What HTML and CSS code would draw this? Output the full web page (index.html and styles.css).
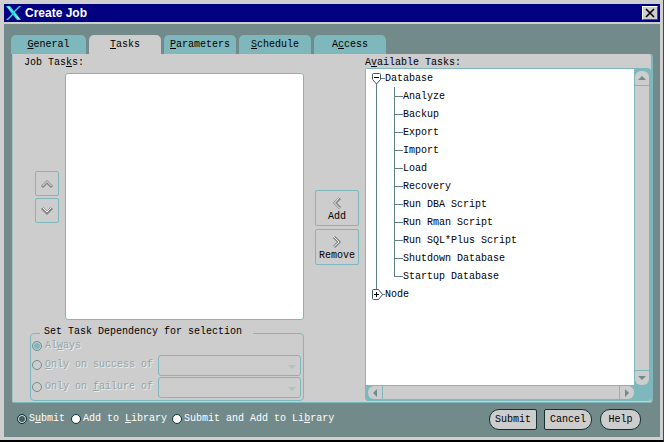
FILE: index.html
```html
<!DOCTYPE html>
<html lang="en">
<head>
<meta charset="utf-8">
<title>Create Job</title>
<link rel="stylesheet" href="styles.css">
</head>
<body>
<div class="window">
  <header class="titlebar">
    <svg class="logo" width="16" height="16" viewBox="0 0 16 16"><path d="M0 1h4l4 5 5-5h2L9 7l6 8h-4L7 10l-5 5H0l6-6z" fill="#2fd8d8"/><path d="M1 2h2l9 12h2z" fill="#9ff"/></svg>
    <span class="title">Create Job</span>
    <button class="close"><svg width="10" height="10" viewBox="0 0 10 10"><path d="M1 1l8 8M9 1l-8 8" stroke="#000" stroke-width="1.6"/></svg></button>
  </header>
  <main class="content">
    <nav class="tabs">
      <div class="tab"><u>G</u>eneral</div>
      <div class="tab active"><u>T</u>asks</div>
      <div class="tab"><u>P</u>arameters</div>
      <div class="tab"><u>S</u>chedule</div>
      <div class="tab">A<u>c</u>cess</div>
    </nav>
    <section class="panel">
      <div class="col-left">
        <div class="label label-job">Job Tas<u>k</u>s:</div>
        <div class="list-row">
          <div class="order">
            <button class="icon-btn"><svg width="14" height="10" viewBox="0 0 14 10"><path d="M2 8l5-5 5 5" fill="none" stroke="#858585" stroke-width="3"/><path d="M2.500 7l4.500-4.500 4.500 4.500" fill="none" stroke="#f4f4f4" stroke-width="1"/></svg></button>
            <button class="icon-btn"><svg width="14" height="10" viewBox="0 0 14 10"><path d="M2 2l5 5 5-5" fill="none" stroke="#858585" stroke-width="3"/><path d="M2.500 1.500l4.500 4.500 4.500-4.500" fill="none" stroke="#f4f4f4" stroke-width="1"/></svg></button>
          </div>
          <div class="job-list"></div>
        </div>
        <div class="group">
          <div class="legend">Set Task Dependency for selection</div>
          <div class="opt disabled first"><span class="radio on"></span>Al<u>w</u>ays</div>
          <div></div>
          <div class="opt disabled"><span class="radio"></span><u>O</u>nly on success of</div>
          <div class="select"><span class="caret"></span></div>
          <div class="opt disabled"><span class="radio"></span>Only on <u>f</u>ailure of</div>
          <div class="select"><span class="caret"></span></div>
        </div>
      </div>
      <div class="col-mid">
        <button class="move-btn"><svg width="12" height="14" viewBox="0 0 12 14"><path d="M9 2l-5 5 5 5" fill="none" stroke="#858585" stroke-width="3"/><path d="M8.500 1.500l-5 5.500 5 5" fill="none" stroke="#f4f4f4" stroke-width="1"/></svg>Add</button>
        <button class="move-btn"><svg width="12" height="14" viewBox="0 0 12 14"><path d="M3 2l5 5-5 5" fill="none" stroke="#858585" stroke-width="3"/><path d="M2.500 1.500l5.500 5.500-5.500 5" fill="none" stroke="#f4f4f4" stroke-width="1"/></svg>Remove</button>
      </div>
      <div class="col-right">
        <div class="label">A<u>v</u>ailable Tasks:</div>
        <div class="tree-box">
          <div class="tree">
            <div class="root">
              <svg class="twist" width="11" height="12" viewBox="0 0 11 12"><path d="M1.500 1.500q0-1 1-1h6q1 0 1 1v5l-4 4.500-4-4.500z" fill="#fff" stroke="#3d5a5a"/><path d="M3 4.500h5" stroke="#000"/></svg>
              Database
            </div>
            <ul class="children">
              <li>Analyze</li>
              <li>Backup</li>
              <li>Export</li>
              <li>Import</li>
              <li>Load</li>
              <li>Recovery</li>
              <li>Run DBA Script</li>
              <li>Run Rman Script</li>
              <li>Run SQL*Plus Script</li>
              <li>Shutdown Database</li>
              <li>Startup Database</li>
            </ul>
            <div class="root">
              <svg class="twist" width="12" height="11" viewBox="0 0 12 11"><path d="M1.500 1.500q0-1 1-1h5l4 5-4 5h-5q-1 0-1-1z" fill="#fff" stroke="#3d5a5a"/><path d="M3 5.500h5M5.500 3v5" stroke="#000"/></svg>
              Node
            </div>
          </div>
          <div class="vbar">
            <span class="sb-btn sb-up"><i class="tri tri-up"></i></span>
            <span class="sb-track"></span>
            <span class="sb-btn sb-down"><i class="tri tri-down"></i></span>
          </div>
          <div class="hbar">
            <span class="sb-btn sb-left"><i class="tri tri-left"></i></span>
            <span class="sb-track"></span>
            <span class="sb-btn sb-right"><i class="tri tri-right"></i></span>
          </div>
          <div class="corner"></div>
        </div>
      </div>
    </section>
    <footer class="footer">
      <div class="opt light"><span class="radio dark"></span>S<u>u</u>bmit</div>
      <div class="opt light"><span class="radio white"></span>Add to <u>L</u>ibrary</div>
      <div class="opt light"><span class="radio white"></span>Submit and Add to Li<u>b</u>rary</div>
      <div class="actions">
        <button class="action a-left">Submit</button>
        <button class="action a-right">Cancel</button>
        <button class="action a-both">Help</button>
      </div>
    </footer>
  </main>
</div>
</body>
</html>
```
FILE: styles.css
```css
* { box-sizing: border-box; }
html, body { margin: 0; padding: 0; }
body {
  width: 664px;
  height: 442px;
  overflow: hidden;
  font: 10px/12px "Liberation Mono", "DejaVu Sans Mono", monospace;
  color: #000;
}
button { font: inherit; color: inherit; padding: 0; margin: 0; cursor: default; }
u { text-underline-offset: 1px; }

.window {
  width: 664px;
  height: 442px;
  background: #cfcfcf;
  padding: 4px 3px 3px 4px;
  border-right: 1px solid #444;
  border-bottom: 2px solid #000;
  display: flex;
  flex-direction: column;
}

.titlebar {
  height: 18px;
  flex: none;
  background: #000080;
  display: flex;
  align-items: center;
  padding: 0 2px;
  margin-bottom: 2px;
}
.logo { flex: none; margin-right: 3px; }
.title {
  font: bold 12px/18px "Liberation Sans", Arial, sans-serif;
  color: #fff;
}
.close {
  margin-left: auto;
  width: 16px;
  height: 14px;
  background: #cfcfcf;
  border: 1px solid;
  border-color: #fff #555 #555 #fff;
  display: flex;
  align-items: center;
  justify-content: center;
}

.content {
  flex: 1;
  min-height: 0;
  background: #728b8a;
  padding: 11px 7px 0 8px;
  display: flex;
  flex-direction: column;
}

.tabs { display: flex; gap: 3px; margin-left: -1px; height: 19px; flex: none; }
.tab {
  width: 72px;
  height: 19px;
  background: #7fb8bc;
  border-radius: 5px 5px 0 0;
  text-align: center;
  line-height: 20px;
}
.tab:first-child { width: 75px; }
.tab.active { background: #cdcdcd; }

.panel {
  height: 349px;
  flex: none;
  background: #cdcdcd;
  border-radius: 0 3px 3px 2px;
  border-right: 2px solid #7fb8bc;
  border-bottom: 1px solid #7fb8bc;
  border-left: 1px solid #a9c4c4;
  padding: 1px 0 0 11px;
  display: flex;
}
.col-left { width: 280px; flex: none; }

.label { height: 13px; line-height: 13px; padding-top: 1px; }
.label-job { height: 18px; }

.list-row { display: flex; height: 247px; }
.order {
  width: 41px;
  padding: 98px 0 0 11px;
  display: flex;
  flex-direction: column;
  gap: 2px;
}
.icon-btn {
  width: 24px;
  height: 25px;
  background: #cdcdcd;
  border: 1px solid #7fb8bc;
  border-radius: 2px;
  display: flex;
  align-items: center;
  justify-content: center;
}
.job-list {
  width: 239px;
  background: #fff;
  border: 1px solid #7fb8bc;
  border-radius: 3px;
}

.group {
  position: relative;
  margin: 13px 0 0 6px;
  width: 274px;
  height: 68px;
  border: 1px solid #7fb8bc;
  border-radius: 4px;
  padding-left: 1px;
  display: grid;
  grid-template-columns: 126px 143px;
  grid-template-rows: 20px 21px 21px;
  row-gap: 1px;
  align-items: center;
}
.legend {
  position: absolute;
  left: 9px;
  top: -9px;
  padding: 1px 11px 0 4px;
  background: #cdcdcd;
  height: 13px;
}
.opt { display: flex; align-items: center; white-space: pre; }
.group .opt { padding-bottom: 2px; }
.group .opt.first { padding: 4px 0 0; }
.disabled {
  color: #93a5a5;
  text-shadow: 1px 1px 0 #ececec;
}
.radio {
  flex: none;
  width: 10px;
  height: 10px;
  border-radius: 50%;
  border: 1px solid #6f9090;
  margin-right: 3px;
  background: #cdcdcd;
}
.radio.on { background: #7fb8bc; box-shadow: inset 0 0 0 1px #cdcdcd; }
.radio.dark { background: #3f5f5f; border-color: #12302f; box-shadow: inset 0 0 0 1px #e6e6e6; }
.radio.white { background: #fff; border-color: #12302f; }
.select {
  height: 21px;
  border: 1px solid #7fb8bc;
  border-radius: 3px;
  position: relative;
}
.caret {
  position: absolute;
  right: 4px;
  top: 9px;
  border: 4px solid transparent;
  border-top: 4px solid #b4c0c0;
  border-bottom: 0;
}

.col-mid {
  flex: none;
  display: flex;
  flex-direction: column;
  gap: 3px;
  margin-left: 11px;
  padding-top: 135px;
  width: 44px;
}
.move-btn {
  width: 44px;
  height: 36px;
  background: #cdcdcd;
  border: 1px solid #7fb8bc;
  border-radius: 2px;
  display: flex;
  flex-direction: column;
  align-items: center;
  padding-top: 5px;
  line-height: 14px;
}

.col-right { flex: none; margin-left: 6px; width: 286px; }
.tree-box {
  width: 286px;
  height: 333px;
  background: #7fb8bc;
  border: 1px solid #7fb8bc;
  border-radius: 3px;
  display: grid;
  grid-template-columns: 268px 16px;
  grid-template-rows: 316px 15px;
}
.tree {
  background: #fff;
  position: relative;
  overflow: hidden;
}
.tree::before {
  content: "";
  position: absolute;
  left: 10px;
  top: 14px;
  width: 1px;
  height: 206px;
  background: #5f8080;
}
.root {
  position: relative;
  height: 18px;
  line-height: 20px;
  padding-left: 19px;
}
.root::before {
  content: "";
  position: absolute;
  left: 15px;
  top: 9px;
  width: 4px;
  height: 1px;
  background: #5f8080;
}
.twist { position: absolute; left: 5px; top: 4px; }
.children { list-style: none; margin: 0; padding: 0 0 0 37px; }
.children li {
  position: relative;
  height: 18px;
  line-height: 20px;
}
.children li::before {
  content: "";
  position: absolute;
  left: -9px;
  top: 9px;
  width: 9px;
  height: 1px;
  background: #5f8080;
}
.children li::after {
  content: "";
  position: absolute;
  left: -9px;
  top: 0;
  width: 1px;
  height: 18px;
  background: #5f8080;
}
.children li:last-child::after { height: 10px; }

.vbar { display: flex; flex-direction: column; padding: 2px 1px 0 1px; }
.hbar { display: flex; padding: 1px 0 1px 2px; }
.sb-track { flex: 1; background: #cdcdcd; }
.vbar .sb-track { border-top: 1px solid #7fb8bc; border-bottom: 1px solid #7fb8bc; }
.hbar .sb-track { border-left: 1px solid #7fb8bc; border-right: 1px solid #7fb8bc; }
.sb-btn {
  flex: none;
  background: #cdcdcd;
  display: flex;
  align-items: center;
  justify-content: center;
}
.vbar .sb-btn { height: 14px; }
.hbar .sb-btn { width: 14px; }
.sb-up { border-radius: 6px 6px 0 0; }
.sb-down { border-radius: 0 0 6px 6px; }
.sb-left { border-radius: 6px 0 0 6px; }
.sb-right { border-radius: 0 6px 6px 0; }
.tri { display: block; width: 0; height: 0; border: 4px solid transparent; }
.tri-up { border-bottom-color: #728b8a; border-top: 0; }
.tri-down { border-top-color: #728b8a; border-bottom: 0; }
.tri-left { border-right-color: #728b8a; border-left: 0; }
.tri-right { border-left-color: #728b8a; border-right: 0; }

.footer {
  flex: 1;
  display: flex;
  align-items: center;
  gap: 6px;
  padding: 0 12px 3px 5px;
}
.light { color: #fff; }
.footer .radio { margin-right: 2px; }
.footer .opt:nth-child(3) { margin-left: -1px; }
.actions { margin-left: auto; margin-top: 2px; display: flex; }
.action {
  height: 21px;
  background: #cdcdcd;
  border: 1px solid #12302f;
  width: 48px;
}
.a-left { border-radius: 10px 2px 2px 10px; margin-right: 7px; }
.a-right { border-radius: 2px 10px 10px 2px; margin-right: 8px; }
.a-both { border-radius: 10px; width: 41px; }
```
